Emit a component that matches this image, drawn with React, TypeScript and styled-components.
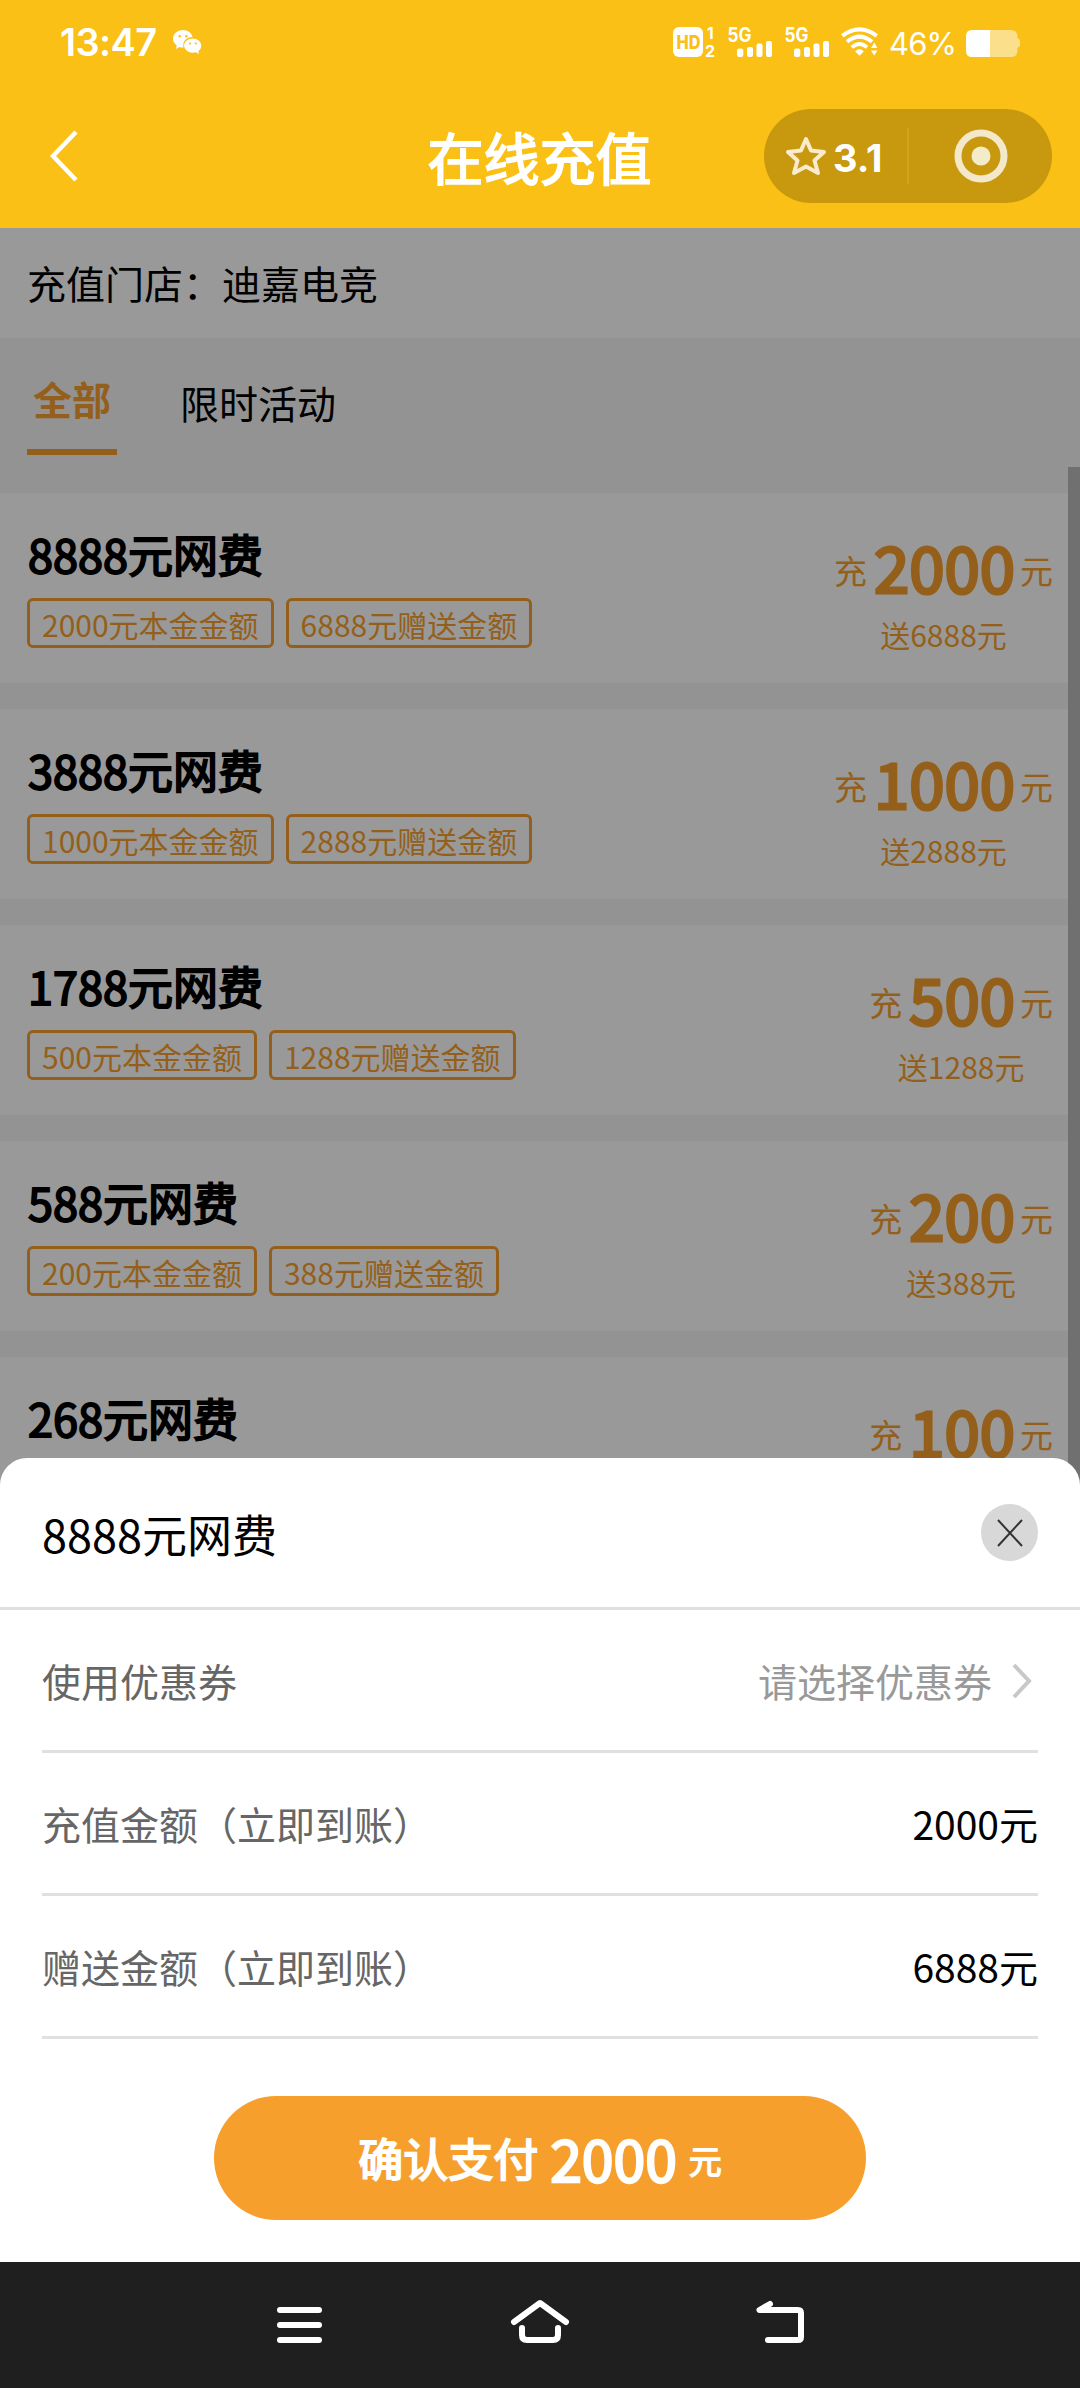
import React from "react";
import styled, { createGlobalStyle } from "styled-components";

const cjk = `"Noto Sans CJK SC", "Noto Sans", sans-serif`;
const latin = `Inter, Roboto, "Noto Sans CJK SC", sans-serif`;
const ORANGE = "#f79f2d";

const GlobalStyle = createGlobalStyle`
  * { box-sizing: border-box; }
  body { margin: 0; background: #fff; font-family: ${cjk}; color: #000; }
  button { border: 0; padding: 0; margin: 0; background: none; font: inherit; color: inherit; }
  svg { overflow: visible; }
`;

const Screen = styled.div`
  width: 1080px;
  height: 2388px;
  display: flex;
  flex-direction: column;
  overflow: hidden;
`;

const Header = styled.header`
  height: 228px;
  flex: none;
  background: #fac015;
  color: #fff;
  display: flex;
  flex-direction: column;
`;

const StatusBar = styled.div`
  height: 84px;
  padding: 0 60px;
  display: flex;
  align-items: center;
  justify-content: space-between;
  font-family: ${latin};
`;

const StatusLeft = styled.div`
  display: flex;
  align-items: center;
  gap: 15px;
`;

const Clock = styled.span`
  width: 98px;
  font-size: 38px;
  line-height: 40px;
  font-weight: 600;
  letter-spacing: -0.6px;
  white-space: nowrap;
`;

const StatusRight = styled.div`
  display: flex;
  align-items: center;
`;

const Percent = styled.span`
  width: 68px;
  margin: 3px 9px 0 9px;
  font-size: 31px;
  line-height: 36px;
  letter-spacing: -0.9px;
  white-space: nowrap;
`;

const TitleBar = styled.div`
  height: 144px;
  padding: 0 28px 0 48px;
  display: grid;
  grid-template-columns: 288px 1fr 288px;
  align-items: center;
`;

const BackButton = styled.button`
  display: flex;
`;

const PageTitle = styled.h1`
  margin: 0 21px 1px 0;
  font-size: 56px;
  line-height: 80px;
  font-weight: 400;
  -webkit-text-stroke: 1.8px #fff;
  white-space: nowrap;
  justify-self: center;
`;

const Capsule = styled.div`
  width: 288px;
  height: 94px;
  border-radius: 47px;
  background: #c8990f;
  display: flex;
  align-items: center;
  font-family: ${latin};
`;

const Rating = styled.div`
  width: 143px;
  padding-left: 21px;
  display: flex;
  align-items: center;
  gap: 6px;
  font-size: 38px;
  font-weight: 700;
`;

const Score = styled.span`
  padding-top: 3px;
`;

const Divider = styled.span`
  width: 2px;
  height: 56px;
  background: #d2a21c;
`;

const Target = styled.span`
  flex: 1;
  display: flex;
  justify-content: center;
`;

const Content = styled.main`
  position: relative;
  flex: 1;
  min-height: 0;
  background: #f5f5f5;
  overflow: hidden;
`;

const Shop = styled.div`
  height: 110px;
  padding: 0 27px;
  background: #fff;
  font-size: 39px;
  line-height: 109px;
`;

const Tabs = styled.nav`
  height: 155px;
  padding-left: 27px;
  display: flex;
  align-items: flex-start;
  gap: 63px;
`;

const Tab = styled.button<{ $active?: boolean }>`
  height: 117px;
  padding: ${(p) => (p.$active ? "0 6px" : "4px 0 0")};
  font-size: 39px;
  line-height: 120px;
  color: ${(p) => (p.$active ? ORANGE : "#000")};
  font-weight: ${(p) => (p.$active ? 700 : 400)};
  border-bottom: ${(p) => (p.$active ? `6px solid ${ORANGE}` : "0")};
`;

const PackageList = styled.section`
  display: flex;
  flex-direction: column;
  gap: 26px;
`;

const Card = styled.article`
  height: 190px;
  flex: none;
  padding: 0 27px;
  background: #fff;
  display: flex;
  justify-content: space-between;
`;

const CardInfo = styled.div`
  padding-top: 28px;
`;

const CardTitle = styled.h2`
  margin: 0;
  padding-left: 1px;
  font-size: 45px;
  line-height: 66px;
  font-weight: 400;
  -webkit-text-stroke: 1.9px #000;
`;

const Tags = styled.div`
  display: flex;
  gap: 12px;
  margin-top: 11px;
`;

const Tag = styled.span`
  height: 50px;
  padding: 0 12px;
  border: 3px solid ${ORANGE};
  border-radius: 6px;
  color: ${ORANGE};
  font-size: 30px;
  line-height: 46px;
`;

const CardPrice = styled.div`
  padding-top: 25px;
  color: ${ORANGE};
  display: flex;
  flex-direction: column;
  align-items: center;
`;

const PriceLine = styled.div`
  height: 94px;
  display: flex;
  align-items: center;
  gap: 5px;
`;

const PriceUnit = styled.span`
  padding-top: 10px;
  font-size: 33px;
  line-height: 50px;
`;

const PriceNumber = styled.strong`
  padding-left: 2px;
  font-size: 63.5px;
  line-height: 92px;
  font-weight: 400;
  -webkit-text-stroke: 3px ${ORANGE};
`;

const Gift = styled.div`
  font-size: 30px;
  line-height: 45px;
`;

const ScrollThumb = styled.div`
  position: absolute;
  top: 239px;
  right: 0;
  width: 12px;
  bottom: 0;
  background: #bbb;
`;

const Mask = styled.div`
  position: absolute;
  inset: 0;
  background: rgba(0, 0, 0, 0.4);
  display: flex;
  flex-direction: column;
  justify-content: flex-end;
`;

const Sheet = styled.section`
  height: 804px;
  background: #fff;
  border-radius: 27px 27px 0 0;
  display: flex;
  flex-direction: column;
`;

const SheetHeader = styled.div`
  height: 152px;
  padding: 0 42px;
  border-bottom: 3px solid #e0e0e0;
  display: flex;
  align-items: center;
  justify-content: space-between;
  font-size: 45px;
`;

const SheetTitle = styled.span`
  padding-top: 2px;
`;

const CloseButton = styled.button`
  width: 57px;
  height: 57px;
  border-radius: 50%;
  background: #d8d8d8;
  display: flex;
  align-items: center;
  justify-content: center;
`;

const Rows = styled.div`
  padding: 0 42px;
`;

const Row = styled.div`
  height: 143px;
  padding-bottom: 1px;
  border-bottom: 3px solid #e0e0e0;
  display: flex;
  align-items: center;
  justify-content: space-between;
  font-size: 39px;
`;

const RowLabel = styled.span`
  color: #666;
`;

const RowValue = styled.span<{ $muted?: boolean }>`
  display: flex;
  align-items: center;
  gap: 20px;
  padding-right: ${(p) => (p.$muted ? "6px" : "0")};
  color: ${(p) => (p.$muted ? "#999" : "#000")};
`;

const Chevron = styled.svg`
  margin-top: 2px;
`;

const PayButton = styled.button`
  width: 652px;
  height: 124px;
  margin: 57px auto 0;
  border-radius: 62px;
  background: ${ORANGE};
  color: #fff;
  display: flex;
  align-items: center;
  justify-content: center;
  font-size: 45px;
  line-height: 122px;
  -webkit-text-stroke: 1.9px #fff;
`;

const PayAmount = styled.span`
  margin: 0 12px 3px;
  font-size: 57px;
  -webkit-text-stroke: 2.4px #fff;
`;

const PayUnit = styled.span`
  padding-top: 4px;
  font-size: 33px;
  -webkit-text-stroke: 1.3px #fff;
`;

const NavBar = styled.footer`
  height: 126px;
  flex: none;
  background: #1f1f1f;
  display: flex;
  align-items: center;
  justify-content: space-between;
  padding: 0 270px;
`;

type Package = { total: number; pay: number; gift?: number };

const packages: Package[] = [
  { total: 8888, pay: 2000, gift: 6888 },
  { total: 3888, pay: 1000, gift: 2888 },
  { total: 1788, pay: 500, gift: 1288 },
  { total: 588, pay: 200, gift: 388 },
  { total: 268, pay: 100 },
];

const WeChatIcon = () => (
  <svg width="29" height="25" viewBox="0 0 29 25" fill="#fff">
    <path d="M10 0C4.500 0 0 3.900 0 8.700c0 2.700 1.500 5 3.700 6.600L3 19l3.600-2.100c1 .4 2.200.5 3.400.5h.6A8.300 8.300 0 0 1 10.300 15c0-4.500 4-8 9.200-8C18.700 3 14.700 0 10 0Z" />
    <path d="M28.300 15.600c0-4-3.900-7.200-8.600-7.200s-8.600 3.200-8.600 7.200 3.900 7.200 8.600 7.200c1.100 0 2.200-.2 3.100-.5L26 24l-.7-2.800c1.900-1.300 3-3.300 3-5.600Z" />
    <g fill="#fac015"><circle cx="6.700" cy="6.300" r="1.200" /><circle cx="13.300" cy="6.300" r="1.200" /><circle cx="17" cy="13.500" r="1.100" /><circle cx="22.800" cy="13.500" r="1.100" /></g>
  </svg>
);

const HdIcon = () => (
  <svg width="44" height="32" viewBox="0 0 44 32" fontFamily="Inter, sans-serif" fontWeight="700">
    <rect x="0" y="1" width="30" height="30" rx="6" fill="#fff" />
    <text x="3.500" y="22.700" fontSize="18.500" fontWeight="800" fill="#fac015" textLength="24" lengthAdjust="spacingAndGlyphs">HD</text>
    <text x="34" y="12.500" fontSize="15.500" fill="#fff">1</text>
    <text x="32" y="31" fontSize="16" fill="#fff">2</text>
  </svg>
);

const SignalSvg = styled.svg`
  margin-left: 11px;
`;

const SignalIcon = () => (
  <SignalSvg width="46" height="32" viewBox="0 0 46 32" fill="#fff">
    <text x="-0.500" y="15.500" fontFamily="Inter, sans-serif" fontSize="19.500" fontWeight="700" textLength="24" lengthAdjust="spacingAndGlyphs">5G</text>
    <rect x="9" y="22.500" width="6.300" height="8.500" rx="2" />
    <rect x="19" y="21" width="6" height="10" rx="2" />
    <rect x="28.500" y="17.500" width="6" height="13.500" rx="2" />
    <rect x="38" y="15" width="6" height="16" rx="2" />
  </SignalSvg>
);

const WifiSvg = styled.svg`
  margin-left: 10px;
`;

const WifiIcon = () => (
  <WifiSvg width="39" height="30" viewBox="0 0 39 30" fill="none" stroke="#fff" strokeWidth="4">
    <path d="M1.300 8.800Q18.500-4 35.700 8.800" />
    <path d="M6 14.800Q18.500 4.500 31 14.800" />
    <path d="M10.800 20.300Q18.500 13.500 26 20.300" strokeWidth="3.800" />
    <path d="M15.500 24.500q3-2.500 6 0l-3 3z" fill="#fff" strokeWidth="1.800" />
    <path d="M30 21l3.200-5.500 3.200 5.500zM30 23.500l3.200 5 3.200-5z" fill="#fff" stroke="none" />
  </WifiSvg>
);

const BatterySvg = styled.svg`
  margin-top: 2px;
`;

const BatteryIcon = () => (
  <BatterySvg width="54" height="27" viewBox="0 0 54 27">
    <path d="M24 0h21q6 0 6.500 6v2.500q2.500 0 2.500 3v3q0 3-2.500 3v3.500q-.5 6-6.500 6H24z" fill="#fcdf8a" />
    <path d="M24 0H6Q0 0 0 6v15q0 6 6 6h18z" fill="#fff" />
  </BatterySvg>
);

export default function App() {
  return (
    <Screen>
      <GlobalStyle />
      <Header>
        <StatusBar>
          <StatusLeft>
            <Clock>13:47</Clock>
            <WeChatIcon />
          </StatusLeft>
          <StatusRight>
            <HdIcon />
            <SignalIcon />
            <SignalIcon />
            <WifiIcon />
            <Percent>46%</Percent>
            <BatteryIcon />
          </StatusRight>
        </StatusBar>
        <TitleBar>
          <BackButton aria-label="返回">
            <svg width="30" height="54" viewBox="0 0 30 54" fill="none">
              <path d="M28 3L5 27l23 24" stroke="#fff" strokeWidth="4.500" />
            </svg>
          </BackButton>
          <PageTitle>在线充值</PageTitle>
          <Capsule>
            <Rating>
              <svg width="42" height="40" viewBox="0 0 42 40" fill="none" stroke="#faebcd" strokeWidth="4" strokeLinejoin="round">
                <path d="M21 3l5 11.500 13 1.400-9.500 8.600 3.500 12.500-12-6.500L9 37l3.500-12.500L3 15.900l13-1.400z" />
              </svg>
              <Score>3.1</Score>
            </Rating>
            <Divider />
            <Target>
              <svg width="54" height="54" viewBox="0 0 54 54" fill="none">
                <circle cx="27" cy="27" r="23" stroke="#f4e8cb" strokeWidth="7" />
                <circle cx="27" cy="27" r="9.500" fill="#f4ebc9" />
              </svg>
            </Target>
          </Capsule>
        </TitleBar>
      </Header>
      <Content>
        <Shop>充值门店：迪嘉电竞</Shop>
        <Tabs>
          <Tab $active>全部</Tab>
          <Tab>限时活动</Tab>
        </Tabs>
        <PackageList>
          {packages.map((p) => (
            <Card key={p.total}>
              <CardInfo>
                <CardTitle>{p.total}元网费</CardTitle>
                {p.gift && (
                  <Tags>
                    <Tag>{p.pay}元本金金额</Tag>
                    <Tag>{p.gift}元赠送金额</Tag>
                  </Tags>
                )}
              </CardInfo>
              <CardPrice>
                <PriceLine>
                  <PriceUnit>充</PriceUnit>
                  <PriceNumber>{p.pay}</PriceNumber>
                  <PriceUnit>元</PriceUnit>
                </PriceLine>
                {p.gift && <Gift>送{p.gift}元</Gift>}
              </CardPrice>
            </Card>
          ))}
        </PackageList>
        <ScrollThumb />
        <Mask>
          <Sheet>
            <SheetHeader>
              <SheetTitle>8888元网费</SheetTitle>
              <CloseButton aria-label="关闭">
                <svg width="28" height="30" viewBox="0 0 28 30" stroke="#333" strokeWidth="2">
                  <path d="M2 2l24 26M26 2L2 28" />
                </svg>
              </CloseButton>
            </SheetHeader>
            <Rows>
              <Row>
                <RowLabel>使用优惠券</RowLabel>
                <RowValue $muted>
                  请选择优惠券
                  <Chevron width="20" height="36" viewBox="0 0 20 36" fill="none" stroke="#c8c8c8" strokeWidth="4">
                    <path d="M2 2l15 16L2 34" />
                  </Chevron>
                </RowValue>
              </Row>
              <Row>
                <RowLabel>充值金额（立即到账）</RowLabel>
                <RowValue>2000元</RowValue>
              </Row>
              <Row>
                <RowLabel>赠送金额（立即到账）</RowLabel>
                <RowValue>6888元</RowValue>
              </Row>
            </Rows>
            <PayButton>
              确认支付<PayAmount>2000</PayAmount><PayUnit>元</PayUnit>
            </PayButton>
          </Sheet>
        </Mask>
      </Content>
      <NavBar>
        <svg width="60" height="60" viewBox="0 0 60 60" stroke="#fff" strokeWidth="6" strokeLinecap="round">
          <path d="M10 15h39M10 30h39M10 45h39" />
        </svg>
        <svg width="60" height="60" viewBox="0 0 60 60" fill="none" stroke="#fff" strokeWidth="6" strokeLinecap="round" strokeLinejoin="round">
          <path d="M4 27L30 8l26 19M12 33v7q0 5 5 5h26q5 0 5-5v-7" />
        </svg>
        <svg width="60" height="60" viewBox="0 0 60 60" fill="none" stroke="#fff" strokeWidth="6" strokeLinecap="round" strokeLinejoin="round">
          <path d="M20 9L9.500 15h38.500q3 0 3 3v24q0 3-3 3H18" />
        </svg>
      </NavBar>
    </Screen>
  );
}
